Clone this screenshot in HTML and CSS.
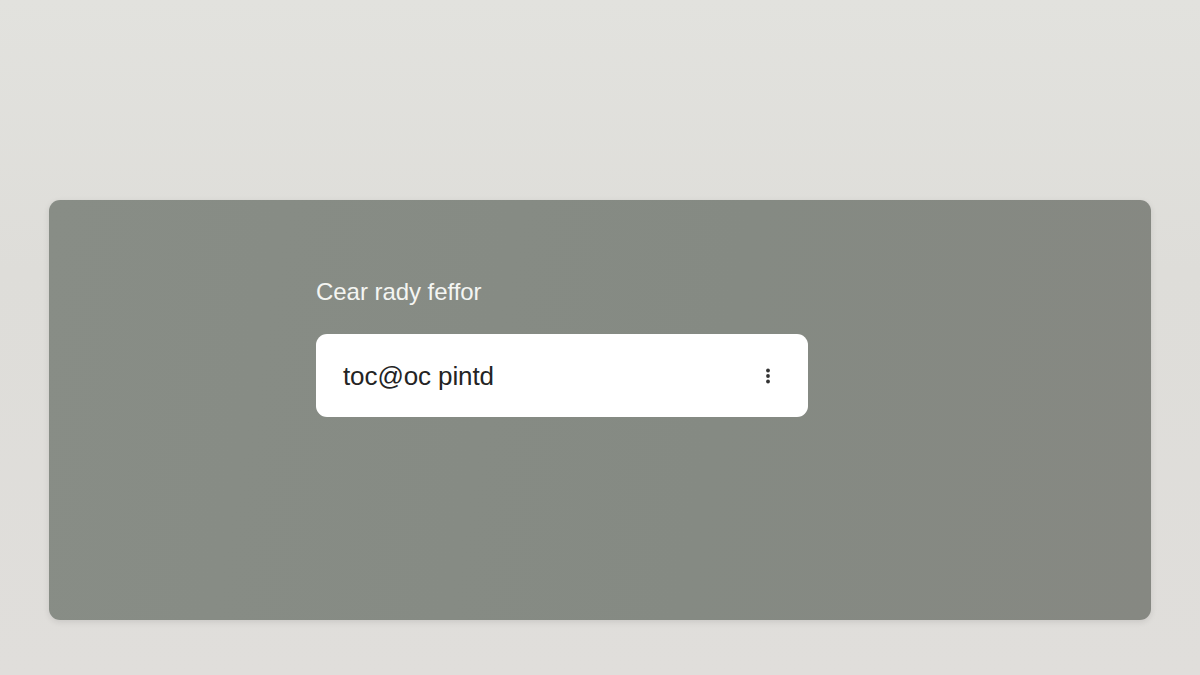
FILE: index.html
```html
<!DOCTYPE html>
<html>
<head>
<meta charset="utf-8">
<link rel="stylesheet" href="styles.css">
</head>
<body>
<div class="page">
  <section class="panel">
    <div class="field">
      <div class="label">Cear rady feffor</div>
      <div class="card">
        <span class="value">toc@oc pintd</span>
        <svg class="more" width="6" height="18" viewBox="0 0 6 18" aria-hidden="true">
          <circle cx="3" cy="3.5" r="1.9" fill="#333"/>
          <circle cx="3" cy="9" r="1.9" fill="#333"/>
          <circle cx="3" cy="14.5" r="1.9" fill="#333"/>
        </svg>
      </div>
    </div>
  </section>
</div>
</body>
</html>
```
FILE: styles.css
```css
html, body {
  margin: 0;
  padding: 0;
}
body {
  width: 1200px;
  height: 675px;
  overflow: hidden;
  background: linear-gradient(180deg, #e2e2de 0%, #deddd9 40%, #e0dedb 100%);
  font-family: "Liberation Sans", Arial, sans-serif;
}
.page {
  padding: 200px 49px 0 49px;
}
.panel {
  height: 420px;
  border-radius: 11px;
  background: linear-gradient(100deg, #888d86 0%, #858a83 60%, #868882 100%);
  box-shadow: 0 2px 6px rgba(0,0,0,0.10);
  padding: 78px 0 0 267px;
  box-sizing: border-box;
}
.field {
  width: 492px;
}
.label {
  color: #f4f5f2;
  font-size: 24px;
  line-height: 28px;
  letter-spacing: -0.05px;
}
.card {
  margin-top: 28px;
  height: 83px;
  background: #ffffff;
  border-radius: 11px;
  display: flex;
  align-items: center;
  justify-content: space-between;
  padding: 0 37px 0 27px;
  box-sizing: border-box;
}
.value {
  color: #242424;
  font-size: 26px;
  letter-spacing: -0.1px;
  margin-top: 2px;
}
.more {
  display: block;
}
```
